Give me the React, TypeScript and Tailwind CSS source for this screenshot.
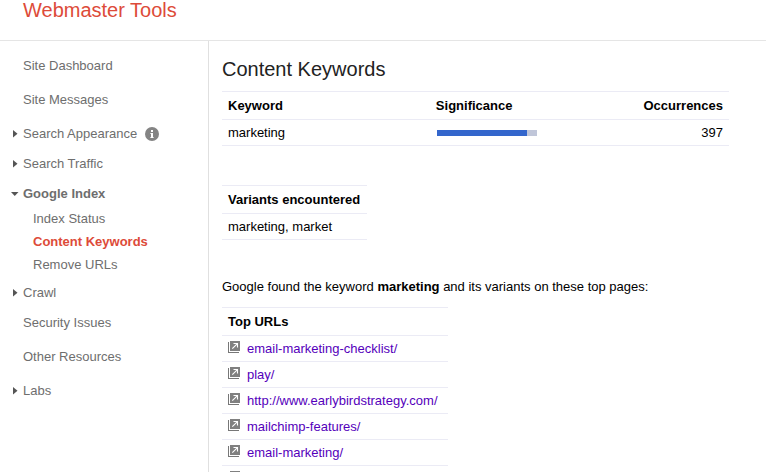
import React from 'react';
import clsx from 'clsx';

interface NavItem {
  label: string;
  expandable?: boolean;
  info?: boolean;
  children?: string[];
}

const NAV_ITEMS: NavItem[] = [
  { label: 'Site Dashboard' },
  { label: 'Site Messages' },
  { label: 'Search Appearance', expandable: true, info: true },
  { label: 'Search Traffic', expandable: true },
  {
    label: 'Google Index',
    expandable: true,
    children: ['Index Status', 'Content Keywords', 'Remove URLs'],
  },
  { label: 'Crawl', expandable: true },
  { label: 'Security Issues' },
  { label: 'Other Resources' },
  { label: 'Labs', expandable: true },
];

const ACTIVE_PAGE = 'Content Keywords';

const TOP_URLS = [
  'email-marketing-checklist/',
  'play/',
  'http://www.earlybirdstrategy.com/',
  'mailchimp-features/',
  'email-marketing/',
  '',
];

const Arrow: React.FC<{ open?: boolean }> = ({ open }) => (
  <svg width="8" height="8" viewBox="0 0 8 8" fill="#555" aria-hidden="true">
    {open ? <path d="M0 2h7.5L3.75 6z" /> : <path d="M2 0v7.5l4.5-3.75z" />}
  </svg>
);

const InfoIcon: React.FC = () => (
  <svg width="14" height="14" viewBox="0 0 14 14" aria-hidden="true">
    <circle cx="7" cy="7" r="7" fill="#848484" />
    <path d="M6 3h2v2H6zM5.4 6H8v4h.6v1H5.4v-1H6V7h-.6z" fill="#fff" />
  </svg>
);

const OpenIcon: React.FC = () => (
  <svg width="12" height="12" viewBox="0 0 12 12" aria-hidden="true">
    <path d="M0 1h1v10h10v1H0z" fill="#777" />
    <path d="M2 0h10v10H2z" fill="#808080" />
    <path d="M5.5 2.5h4v4M9.2 2.8L4.3 7.7" fill="none" stroke="#fff" strokeWidth="1.1" />
  </svg>
);

const Sidebar: React.FC = () => (
  <nav className="w-[209px] flex-none border-r border-[#e0e0e0] pt-[15px] text-[#6e6e6e]">
    <ul>
      {NAV_ITEMS.map((item) => (
        <li
          key={item.label}
          className={clsx(item.children ? 'mb-[7px]' : item.expandable ? 'mb-2.5' : 'mb-3.5')}
        >
          <div className="flex items-center pl-[11px] leading-5">
            <span className="w-3 flex-none">
              {item.expandable && <Arrow open={!!item.children} />}
            </span>
            <a href="#" className={clsx(item.children && 'font-bold')}>
              {item.label}
            </a>
            {item.info && (
              <button type="button" aria-label="More information" className="ml-2">
                <InfoIcon />
              </button>
            )}
          </div>
          {item.children && (
            <ul className="mt-[3px] pl-[33px] leading-[23px]">
              {item.children.map((child) => (
                <li key={child}>
                  <a href="#" className={clsx(child === ACTIVE_PAGE && 'font-bold text-[#dd4b39]')}>
                    {child}
                  </a>
                </li>
              ))}
            </ul>
          )}
        </li>
      ))}
    </ul>
  </nav>
);

const App: React.FC = () => {
  return (
    <div className="flex h-screen flex-col overflow-hidden bg-white font-['Liberation_Sans',Arial,sans-serif] text-[13px] text-black">
      {/* Header */}
      <header className="flex-none border-b border-[#e5e5e5] pb-5 pl-[23px]">
        <h1 className="text-xl leading-5 text-[#dd4b39]">Webmaster Tools</h1>
      </header>

      <div className="flex min-h-0 flex-1">
        <Sidebar />

        <main className="min-w-0 flex-1 pt-4 pr-[37px] pl-[13px]">
          <h2 className="text-xl leading-6 text-[#222]">Content Keywords</h2>

          {/* Keyword summary */}
          <table className="mt-2.5 w-full border-separate border-spacing-0 border-t border-[#ebebf5]">
            <thead>
              <tr className="h-7 text-left">
                <th className="w-[41%] border-b border-[#ebebf5] px-1.5">Keyword</th>
                <th className="border-b border-[#ebebf5] px-1.5">Significance</th>
                <th className="border-b border-[#ebebf5] px-1.5 text-right">Occurrences</th>
              </tr>
            </thead>
            <tbody>
              <tr className="h-[26px]">
                <td className="border-b border-[#ebebf5] px-1.5">marketing</td>
                <td className="border-b border-[#ebebf5] px-[7px]">
                  <div className="h-1.5 w-[100px] bg-[#c0c6d9]">
                    <div className="h-full w-9/10 bg-[#3366cc]" />
                  </div>
                </td>
                <td className="border-b border-[#ebebf5] px-1.5 text-right">397</td>
              </tr>
            </tbody>
          </table>

          <table className="mt-[39px] min-w-[145px] border-separate border-spacing-0 border-t border-[#ebebf5]">
            <thead>
              <tr className="h-7 text-left">
                <th className="border-b border-[#ebebf5] px-1.5">Variants encountered</th>
              </tr>
            </thead>
            <tbody>
              <tr className="h-[26px]">
                <td className="border-b border-[#ebebf5] px-1.5">marketing, market</td>
              </tr>
            </tbody>
          </table>

          <p className="mt-[37px] leading-5">
            Google found the keyword <b>marketing</b> and its variants on these top pages:
          </p>

          {/* Pages using the keyword */}
          <table className="mt-2.5 min-w-[226px] border-separate border-spacing-0 border-t border-[#ebebf5]">
            <thead>
              <tr className="h-7 text-left">
                <th className="border-b border-[#ebebf5] px-1.5">Top URLs</th>
              </tr>
            </thead>
            <tbody>
              {TOP_URLS.map((url) => (
                <tr key={url} className="h-[26px]">
                  <td className="border-b border-[#ebebf5] px-1.5">
                    <div className="flex min-h-4 items-start gap-[7px] leading-4">
                      <a href="#" aria-label="Open page">
                        <OpenIcon />
                      </a>
                      {url && (
                        <a href="#" className="text-[#5500bb]">
                          {url}
                        </a>
                      )}
                    </div>
                  </td>
                </tr>
              ))}
            </tbody>
          </table>
        </main>
      </div>
    </div>
  );
};

export default App;
